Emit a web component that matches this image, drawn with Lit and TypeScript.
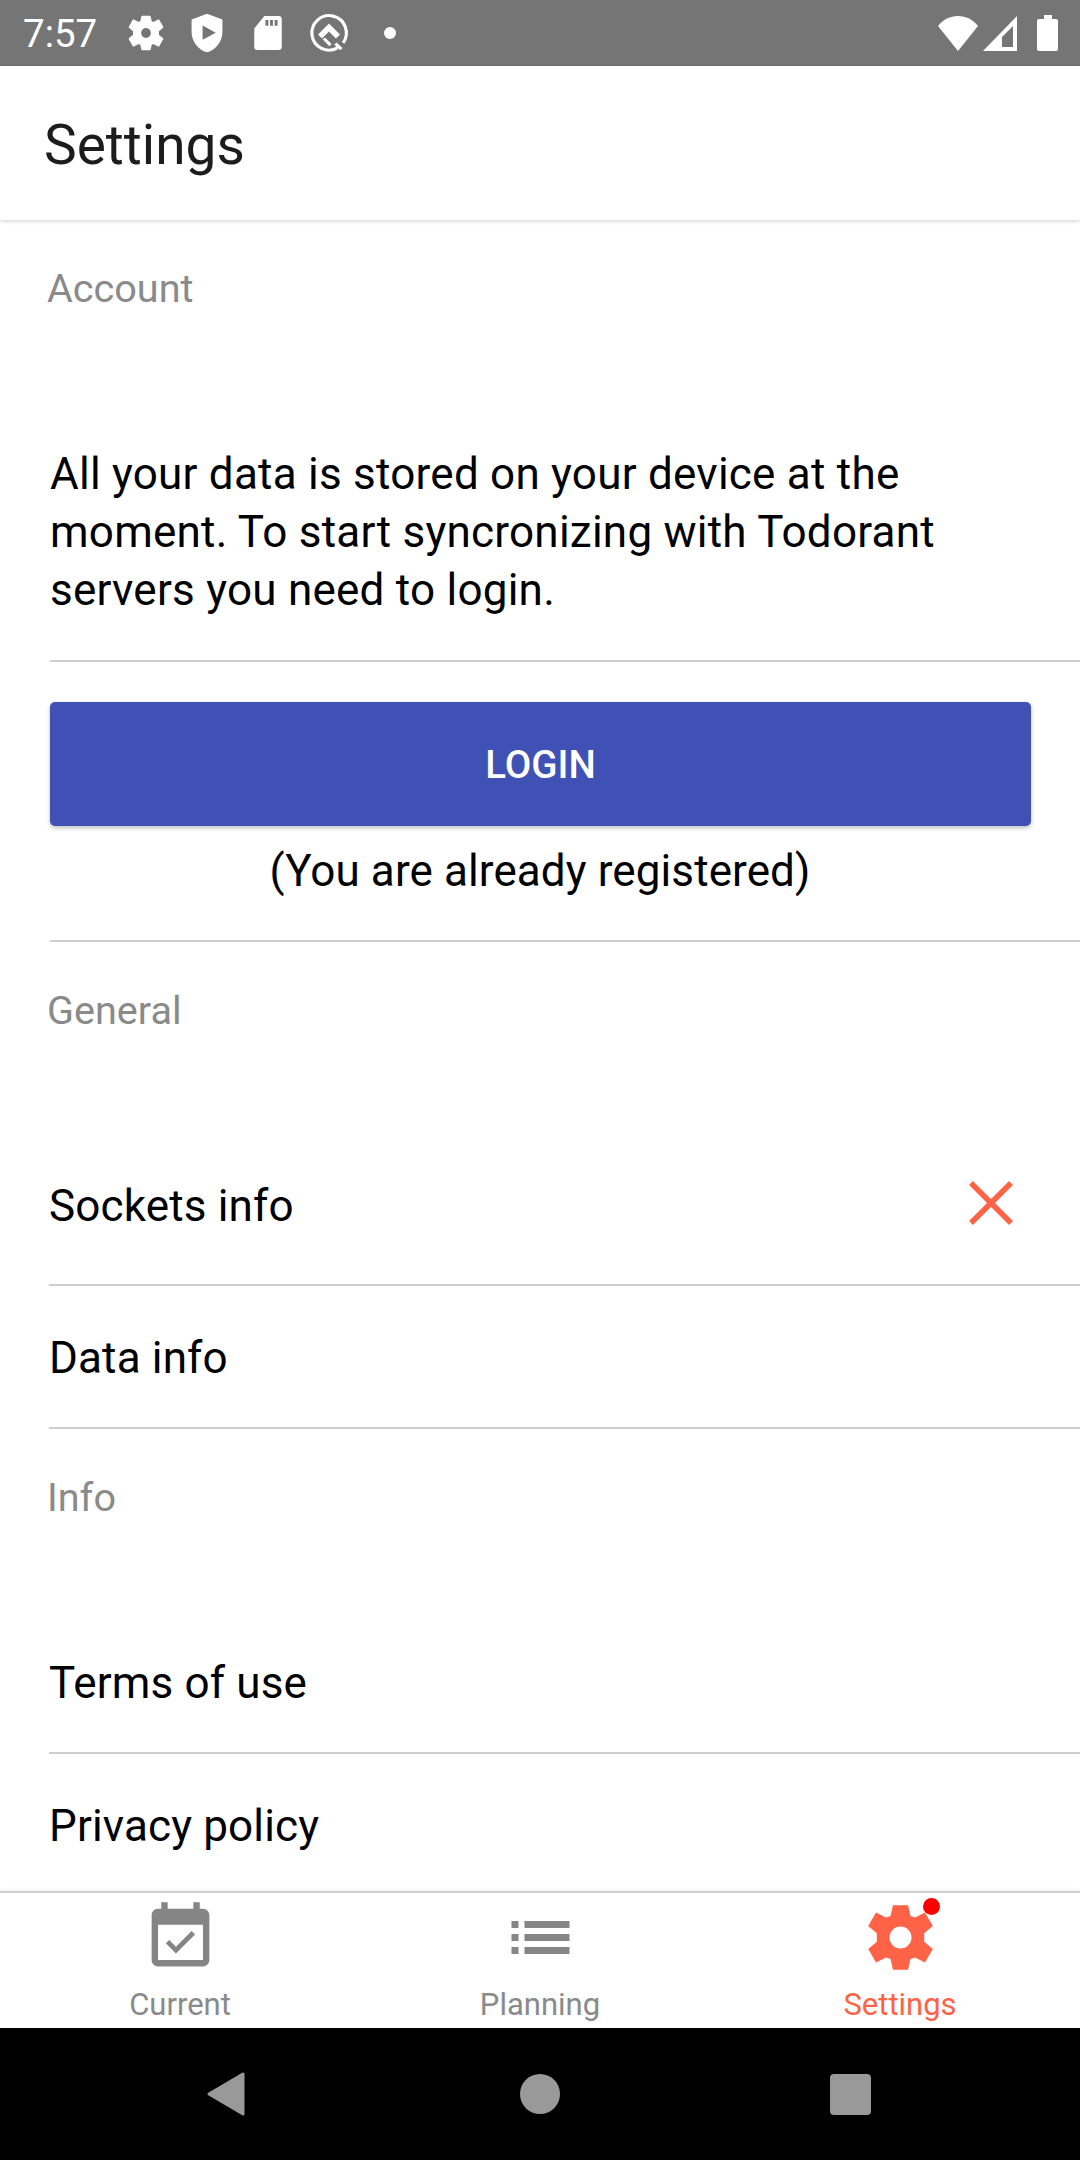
import { LitElement, html, css, svg } from "lit";
import { customElement } from "lit/decorators.js";

// six flat teeth, drawn around 0,0 in a 77 unit box
const GEAR_PATH =
  "M-7.500-32.300H7.500L10-21.500 14.500-20 24.500-25 32.300-11.500 23.700-4.300V4.300L32.300 11.500 24.500 25 14.500 20 10 21.500 7.500 32.300H-7.500L-10 21.500-14.500 20-24.500 25-32.300 11.500-23.700 4.300V-4.300L-32.300-11.500-24.500-25-14.500-20-10-21.500Z" +
  "M0-11A11 11 0 1 0 0 11 11 11 0 1 0 0-11Z";

const statusIcons = [
  svg`<g transform="translate(12 12) scale(.28)"><path fill="#fff" fill-rule="evenodd" stroke="#fff" stroke-width="3" stroke-linejoin="round" d=${GEAR_PATH} /></g>`,
  svg`<path fill="#fff" d="M12 1.500 3.600 4.700v6.600c0 5.200 3.500 10 8.400 11.200 4.900-1.200 8.400-6 8.400-11.200V4.700L12 1.500z" /><path fill="#757575" d="M9.600 7.900v7.800l7.200-3.900-7.200-3.900z" />`,
  svg`<path fill="#fff" d="M18 2.700h-8L4.500 9.500v10.300c0 .8.700 1.500 1.500 1.500h12c.8 0 1.500-.7 1.500-1.500V4.200c0-.8-.7-1.500-1.500-1.500z" /><path fill="#757575" d="M10.600 4.900h1.600V8h-1.600zM13.100 4.900h1.600V8h-1.600zM15.600 4.900h1.600V8h-1.600z" />`,
  svg`<path fill="none" stroke="#fff" stroke-width="1.700" d="M16.700 20.100A9.400 9.400 0 1 1 19.700 17.400M15.500 17.800l3.300 3" /><path fill="#fff" d="M12 6.800l6 6-2.200 2.200L12 11.200 8.200 15 6 12.800zM8.600 15.600l1.200-1.200 3.600 3.600-1.200 1.200z" />`,
];

@customElement("app-root")
export class AppRoot extends LitElement {
  static styles = css`
    :host {
      display: flex;
      flex-direction: column;
      width: 1080px;
      height: 2160px;
      background: #fff;
      font-family: Roboto, "Noto Sans", sans-serif;
      color: #000;
      overflow: hidden;
    }

    .status-bar {
      display: flex;
      align-items: center;
      height: 66px;
      flex: none;
      padding: 0 22px 0 23px;
      box-sizing: border-box;
      background: #757575;
      color: #fff;
    }
    .time {
      font-size: 38.500px;
      width: 74px;
      margin-right: 27px;
    }
    .status-icon {
      width: 44px;
      height: 44px;
      margin-right: 17px;
    }
    .status-dot {
      width: 12px;
      height: 12px;
      border-radius: 50%;
      background: #fff;
      margin-left: 16px;
    }
    .status-right {
      display: flex;
      align-items: center;
      margin-left: auto;
    }
    .status-right svg {
      display: block;
    }
    .signal {
      margin-left: 5px;
    }
    .battery {
      margin-left: 20px;
    }

    .header {
      position: relative;
      z-index: 1;
      flex: none;
      display: flex;
      align-items: center;
      height: 154px;
      padding: 4px 0 0 44px;
      box-sizing: border-box;
      font-size: 55px;
      color: #1c1c1c;
      background: #fff;
      box-shadow: 0 1px 4px rgba(0, 0, 0, 0.2);
    }

    .content {
      flex: 1;
      overflow: hidden;
      min-height: 0;
    }

    .section-title {
      height: 95px;
      padding: 44px 0 0 47px;
      box-sizing: border-box;
      font-size: 39.600px;
      line-height: 50px;
      color: #8a8a8a;
    }

    .intro {
      margin: 130px 0 0 50px;
      padding: 0 50px 41px 0;
      font-size: 44px;
      line-height: 58px;
      letter-spacing: 0.24px;
      border-bottom: 2px solid #cfcfcf;
    }

    .login-wrap {
      padding: 40px 49px 0 50px;
    }
    .login {
      display: flex;
      align-items: center;
      justify-content: center;
      height: 124px;
      background: #3f51b5;
      border-radius: 5px;
      color: #fff;
      font-size: 38.500px;
      font-weight: 500;
      box-shadow: 0 2px 4px rgba(0, 0, 0, 0.25);
    }
    .registered {
      margin-left: 50px;
      padding: 16px 50px 0 0;
      height: 116px;
      box-sizing: border-box;
      text-align: center;
      font-size: 44px;
      line-height: 58px;
      letter-spacing: 0.1px;
      border-bottom: 2px solid #cfcfcf;
    }

    .row {
      display: flex;
      align-items: center;
      justify-content: space-between;
      margin-left: 49px;
      padding-top: 2px;
      height: 143px;
      box-sizing: border-box;
      font-size: 44px;
      letter-spacing: 0.15px;
      border-bottom: 2px solid #cfcfcf;
    }
    .row.sockets {
      height: 160px;
      margin-top: 89px;
      padding-right: 66px;
    }
    .row.terms {
      margin-top: 87px;
    }
    .row.privacy {
      height: 142px;
      border-bottom: none;
    }
    .cross {
      width: 46px;
      height: 46px;
      display: block;
      margin-bottom: 6px;
    }

    .tabs {
      position: relative;
      flex: none;
      display: flex;
      height: 137px;
      box-sizing: border-box;
      border-top: 2px solid #cfcfcf;
      background: #fff;
      box-shadow: 0 -2px 3px rgba(0, 0, 0, 0.05);
    }
    .tab {
      position: relative;
      flex: 1;
      display: flex;
      flex-direction: column;
      align-items: center;
      color: #8a8a8a;
      font-size: 31px;
    }
    .tab.active {
      color: #ff6347;
    }
    .tab-icon {
      width: 77px;
      height: 77px;
      margin-top: 6px;
      display: block;
    }
    .tab-label {
      line-height: 34px;
      margin-top: 12px;
    }
    .badge {
      position: absolute;
      top: 5px;
      left: 203px;
      width: 17px;
      height: 17px;
      border-radius: 50%;
      background: #f00;
    }

    .nav-bar {
      flex: none;
      display: flex;
      align-items: center;
      height: 132px;
      padding-left: 207px;
      box-sizing: border-box;
      background: #000;
    }
    .nav-bar svg {
      display: block;
    }
    .nav-back {
      margin-right: 275px;
    }
    .nav-home {
      margin-right: 270px;
    }
  `;

  render() {
    return html`
      <div class="status-bar">
        <span class="time">7:57</span>
        ${statusIcons.map(
          (icon) =>
            html`<svg class="status-icon" viewBox="0 0 24 24">${icon}</svg>`
        )}
        <span class="status-dot"></span>
        <div class="status-right">
          <svg width="40" height="35" viewBox="0 0 40 35">
            <path fill="#fff" d="M0 10C5 3.500 12 0 20 0s15 3.500 20 10L20 35 0 10z" />
          </svg>
          <svg class="signal" width="34" height="35" viewBox="0 0 34 35">
            <path fill="#fff" fill-rule="evenodd" d="M34 0v35H0L34 0zM30 10 19 21v10h11V10z" />
          </svg>
          <svg class="battery" width="21" height="36" viewBox="0 0 21 36">
            <path fill="#fff" d="M7 0h8v4h4c1.200 0 2 .8 2 2v28c0 1.200-.8 2-2 2H2c-1.200 0-2-.8-2-2V6c0-1.200.8-2 2-2h5V0z" />
          </svg>
        </div>
      </div>

      <div class="header">Settings</div>

      <div class="content">
        <div class="section-title">Account</div>
        <div class="intro">
          All your data is stored on your device at the moment. To start
          syncronizing with Todorant servers you need to login.
        </div>
        <div class="login-wrap"><div class="login">LOGIN</div></div>
        <div class="registered">(You are already registered)</div>

        <div class="section-title">General</div>
        <div class="row sockets">
          <span>Sockets info</span>
          <svg class="cross" viewBox="0 0 46 46">
            <path stroke="#ff6347" stroke-width="5.500" d="M3 3l40 40M43 3 3 43" />
          </svg>
        </div>
        <div class="row data"><span>Data info</span></div>

        <div class="section-title">Info</div>
        <div class="row terms"><span>Terms of use</span></div>
        <div class="row privacy"><span>Privacy policy</span></div>
      </div>

      <div class="tabs">
        <div class="tab">
          <svg class="tab-icon" viewBox="0 0 24 24">
            <path fill="#858585" d="M16.530 11.060 15.470 10l-4.880 4.880-2.120-2.120-1.060 1.060L10.590 17l5.940-5.940zM19 3h-1V1h-2v2H8V1H6v2H5c-1.110 0-1.990.9-1.990 2L3 19c0 1.100.89 2 2 2h14c1.100 0 2-.9 2-2V5c0-1.100-.9-2-2-2zm0 16H5V8h14v11z" />
          </svg>
          <span class="tab-label">Current</span>
        </div>
        <div class="tab">
          <svg class="tab-icon" viewBox="0 0 77 77">
            <path fill="#858585" d="M9.500 22h7v7h-7zM22.500 22h45v7h-45zM9.500 35h7v7h-7zM22.500 35h45v7h-45zM9.500 48h7v7h-7zM22.500 48h45v7h-45z" />
          </svg>
          <span class="tab-label">Planning</span>
        </div>
        <div class="tab active">
          <svg class="tab-icon" viewBox="-38.500 -38.500 77 77">
            <path fill="#ff6347" fill-rule="evenodd" d=${GEAR_PATH} />
          </svg>
          <span class="tab-label">Settings</span>
          <span class="badge"></span>
        </div>
      </div>

      <div class="nav-bar">
        <svg class="nav-back" width="38" height="44" viewBox="0 0 38 44">
          <path fill="#999" stroke="#999" stroke-width="3" stroke-linejoin="round" d="M2 22 36 2v40L2 22z" />
        </svg>
        <svg class="nav-home" width="40" height="40" viewBox="0 0 40 40">
          <circle cx="20" cy="20" r="20" fill="#999" />
        </svg>
        <svg width="41" height="41" viewBox="0 0 41 41">
          <rect width="41" height="41" rx="4" fill="#999" />
        </svg>
      </div>
    `;
  }
}
